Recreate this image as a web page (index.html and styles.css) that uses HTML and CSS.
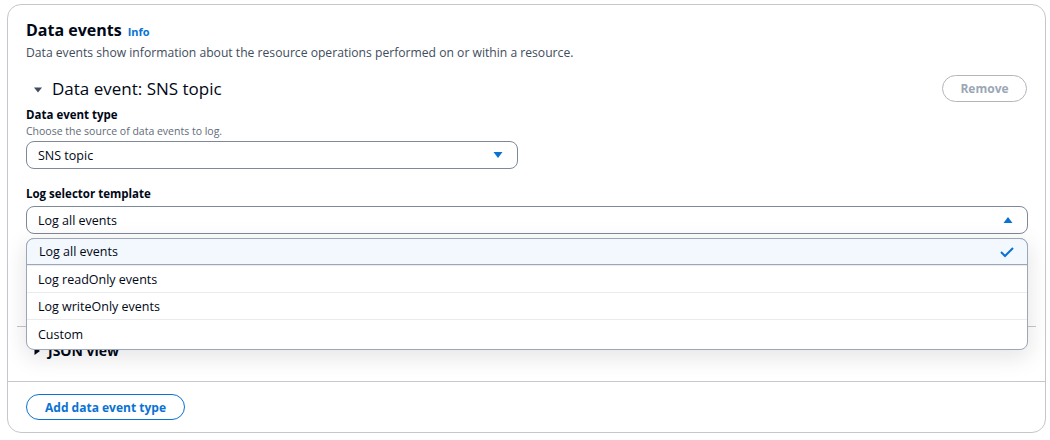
FILE: index.html
```html
<!DOCTYPE html>
<html>
<head>
<meta charset="utf-8">
<link rel="stylesheet" href="styles.css">
</head>
<body>
<div class="card">
  <div class="card-body">
    <div class="hdr">
      <h2 class="title">Data events</h2><a class="info">Info</a>
    </div>
    <p class="desc">Data events show information about the resource operations performed on or within a resource.</p>

    <div class="event">
      <div class="event-head">
        <div class="exp-title">
          <svg class="caret-down" width="10" height="8" viewBox="0 0 10 8"><path d="M1 1.5 L9 1.5 L5 6.5 Z" fill="#414d5c"/></svg>
          <span>Data event: SNS topic</span>
        </div>
        <button class="btn-remove">Remove</button>
      </div>

      <div class="field">
        <div class="label">Data event type</div>
        <div class="hint">Choose the source of data events to log.</div>
        <div class="select short">
          <span>SNS topic</span>
          <svg width="12" height="10" viewBox="0 0 12 10"><path d="M1.5 2 L10.5 2 L6 8 Z" fill="#0972d3"/></svg>
        </div>
      </div>

      <div class="field f2">
        <div class="label">Log selector template</div>
        <div class="select-wrap">
          <div class="select">
            <span>Log all events</span>
            <svg width="12" height="10" viewBox="0 0 12 10"><path d="M1.5 8 L10.5 8 L6 2 Z" fill="#0972d3"/></svg>
          </div>
          <ul class="menu">
            <li class="sel"><span>Log all events</span>
              <svg width="16" height="14" viewBox="0 0 16 14"><path d="M2 7 L6 11 L14 3" fill="none" stroke="#0972d3" stroke-width="2"/></svg>
            </li>
            <li><span>Log readOnly events</span></li>
            <li><span>Log writeOnly events</span></li>
            <li><span>Custom</span></li>
          </ul>
        </div>
      </div>
    </div>

    <div class="divider"></div>

    <div class="json">
      <svg width="8" height="10" viewBox="0 0 8 10"><path d="M1.5 1 L7 5 L1.5 9 Z" fill="#000716"/></svg>
      <span>JSON view</span>
    </div>
  </div>
  <div class="card-foot">
    <button class="btn-add">Add data event type</button>
  </div>
</div>
</body>
</html>
```

FILE: styles.css
```css
* { box-sizing: border-box; }
body {
  margin: 0;
  background: #ffffff;
  font-family: "Open Sans", "Noto Sans", Arial, sans-serif;
  color: #000716;
}
.card {
  margin: 4px 4px 0 7px;
  height: 429px;
  border: 1px solid #c6c6cd;
  border-radius: 14px;
  display: flex;
  flex-direction: column;
}
.card-body {
  padding: 13px 9px 0 9px;
  flex: 1;
}
.hdr {
  display: flex;
  align-items: baseline;
  gap: 6px;
  padding: 0 9px;
}
.title {
  margin: 0;
  font-size: 16px;
  line-height: 24px;
  font-weight: 700;
}
.info {
  font-size: 11px;
  font-weight: 700;
  color: #0972d3;
}
.desc {
  margin: 2px 0 0;
  padding: 0 9px;
  font-size: 12.15px;
  line-height: 18px;
  color: #414d5c;
}
.event {
  padding: 0 9px;
}
.event-head {
  margin-top: 13px;
  display: flex;
  justify-content: space-between;
  align-items: center;
}
.exp-title {
  display: flex;
  align-items: center;
  gap: 9px;
  padding-left: 7px;
  font-size: 17px;
  line-height: 26px;
}
.caret-down { margin-top: 2px; }
.btn-remove {
  width: 85px;
  height: 27px;
  margin-right: 0;
  border: 1px solid #b4b4bb;
  border-radius: 14px;
  background: #fff;
  color: #9ba7b6;
  font-family: inherit;
  font-size: 12px;
  font-weight: 700;
}
.field { margin-top: 4px; }
.f2 { margin-top: 16px; }
.label {
  font-size: 11.5px;
  font-weight: 700;
  line-height: 17px;
}
.hint {
  font-size: 10.5px;
  line-height: 16px;
  color: #5f6b7a;
}
.select {
  height: 28px;
  margin-top: 2px;
  border: 1px solid #7d8998;
  border-radius: 8px;
  display: flex;
  align-items: center;
  justify-content: space-between;
  padding: 0 13px 0 11px;
  font-size: 12.5px;
}
.select.short { width: 492px; }
.f2 .select { margin-top: 4px; width: 1002px; }
.select-wrap { position: relative; }
.menu {
  position: absolute;
  left: 0;
  top: calc(100% + 4px);
  width: 1002px;
  margin: 0;
  padding: 0;
  list-style: none;
  background: #fff;
  border: 1px solid #9ba7b6;
  border-radius: 8px;
  box-shadow: 0 6px 22px 2px rgba(0, 7, 22, 0.10);
  z-index: 5;
  font-size: 12.5px;
}
.menu li {
  height: 27px;
  display: flex;
  align-items: center;
  justify-content: space-between;
  padding: 0 11px;
  border-top: 1px solid #e9ebed;
}
.menu li:first-child { border-top: none; }
.menu li:last-child { height: 30px; }
.menu li.sel {
  background: #f2f8fd;
  border: 1px solid #9ba7b6;
  border-radius: 8px 8px 0 0;
  margin: -1px -1px 0 -1px;
  height: 27px;
  padding: 0 12px;
}
.divider {
  margin-top: 92px;
  height: 1px;
  background: #c6c6cd;
}
.json {
  display: flex;
  align-items: center;
  gap: 7px;
  padding: 14px 0 0 16px;
  font-size: 14px;
  line-height: 20px;
  font-weight: 700;
}
.card-foot {
  border-top: 1px solid #c6c6cd;
  padding: 12px 18px 12px;
}
.btn-add {
  width: 159px;
  height: 26px;
  border: 1px solid #0972d3;
  border-radius: 14px;
  background: #fff;
  color: #0972d3;
  font-family: inherit;
  font-size: 12px;
  font-weight: 700;
}
```
